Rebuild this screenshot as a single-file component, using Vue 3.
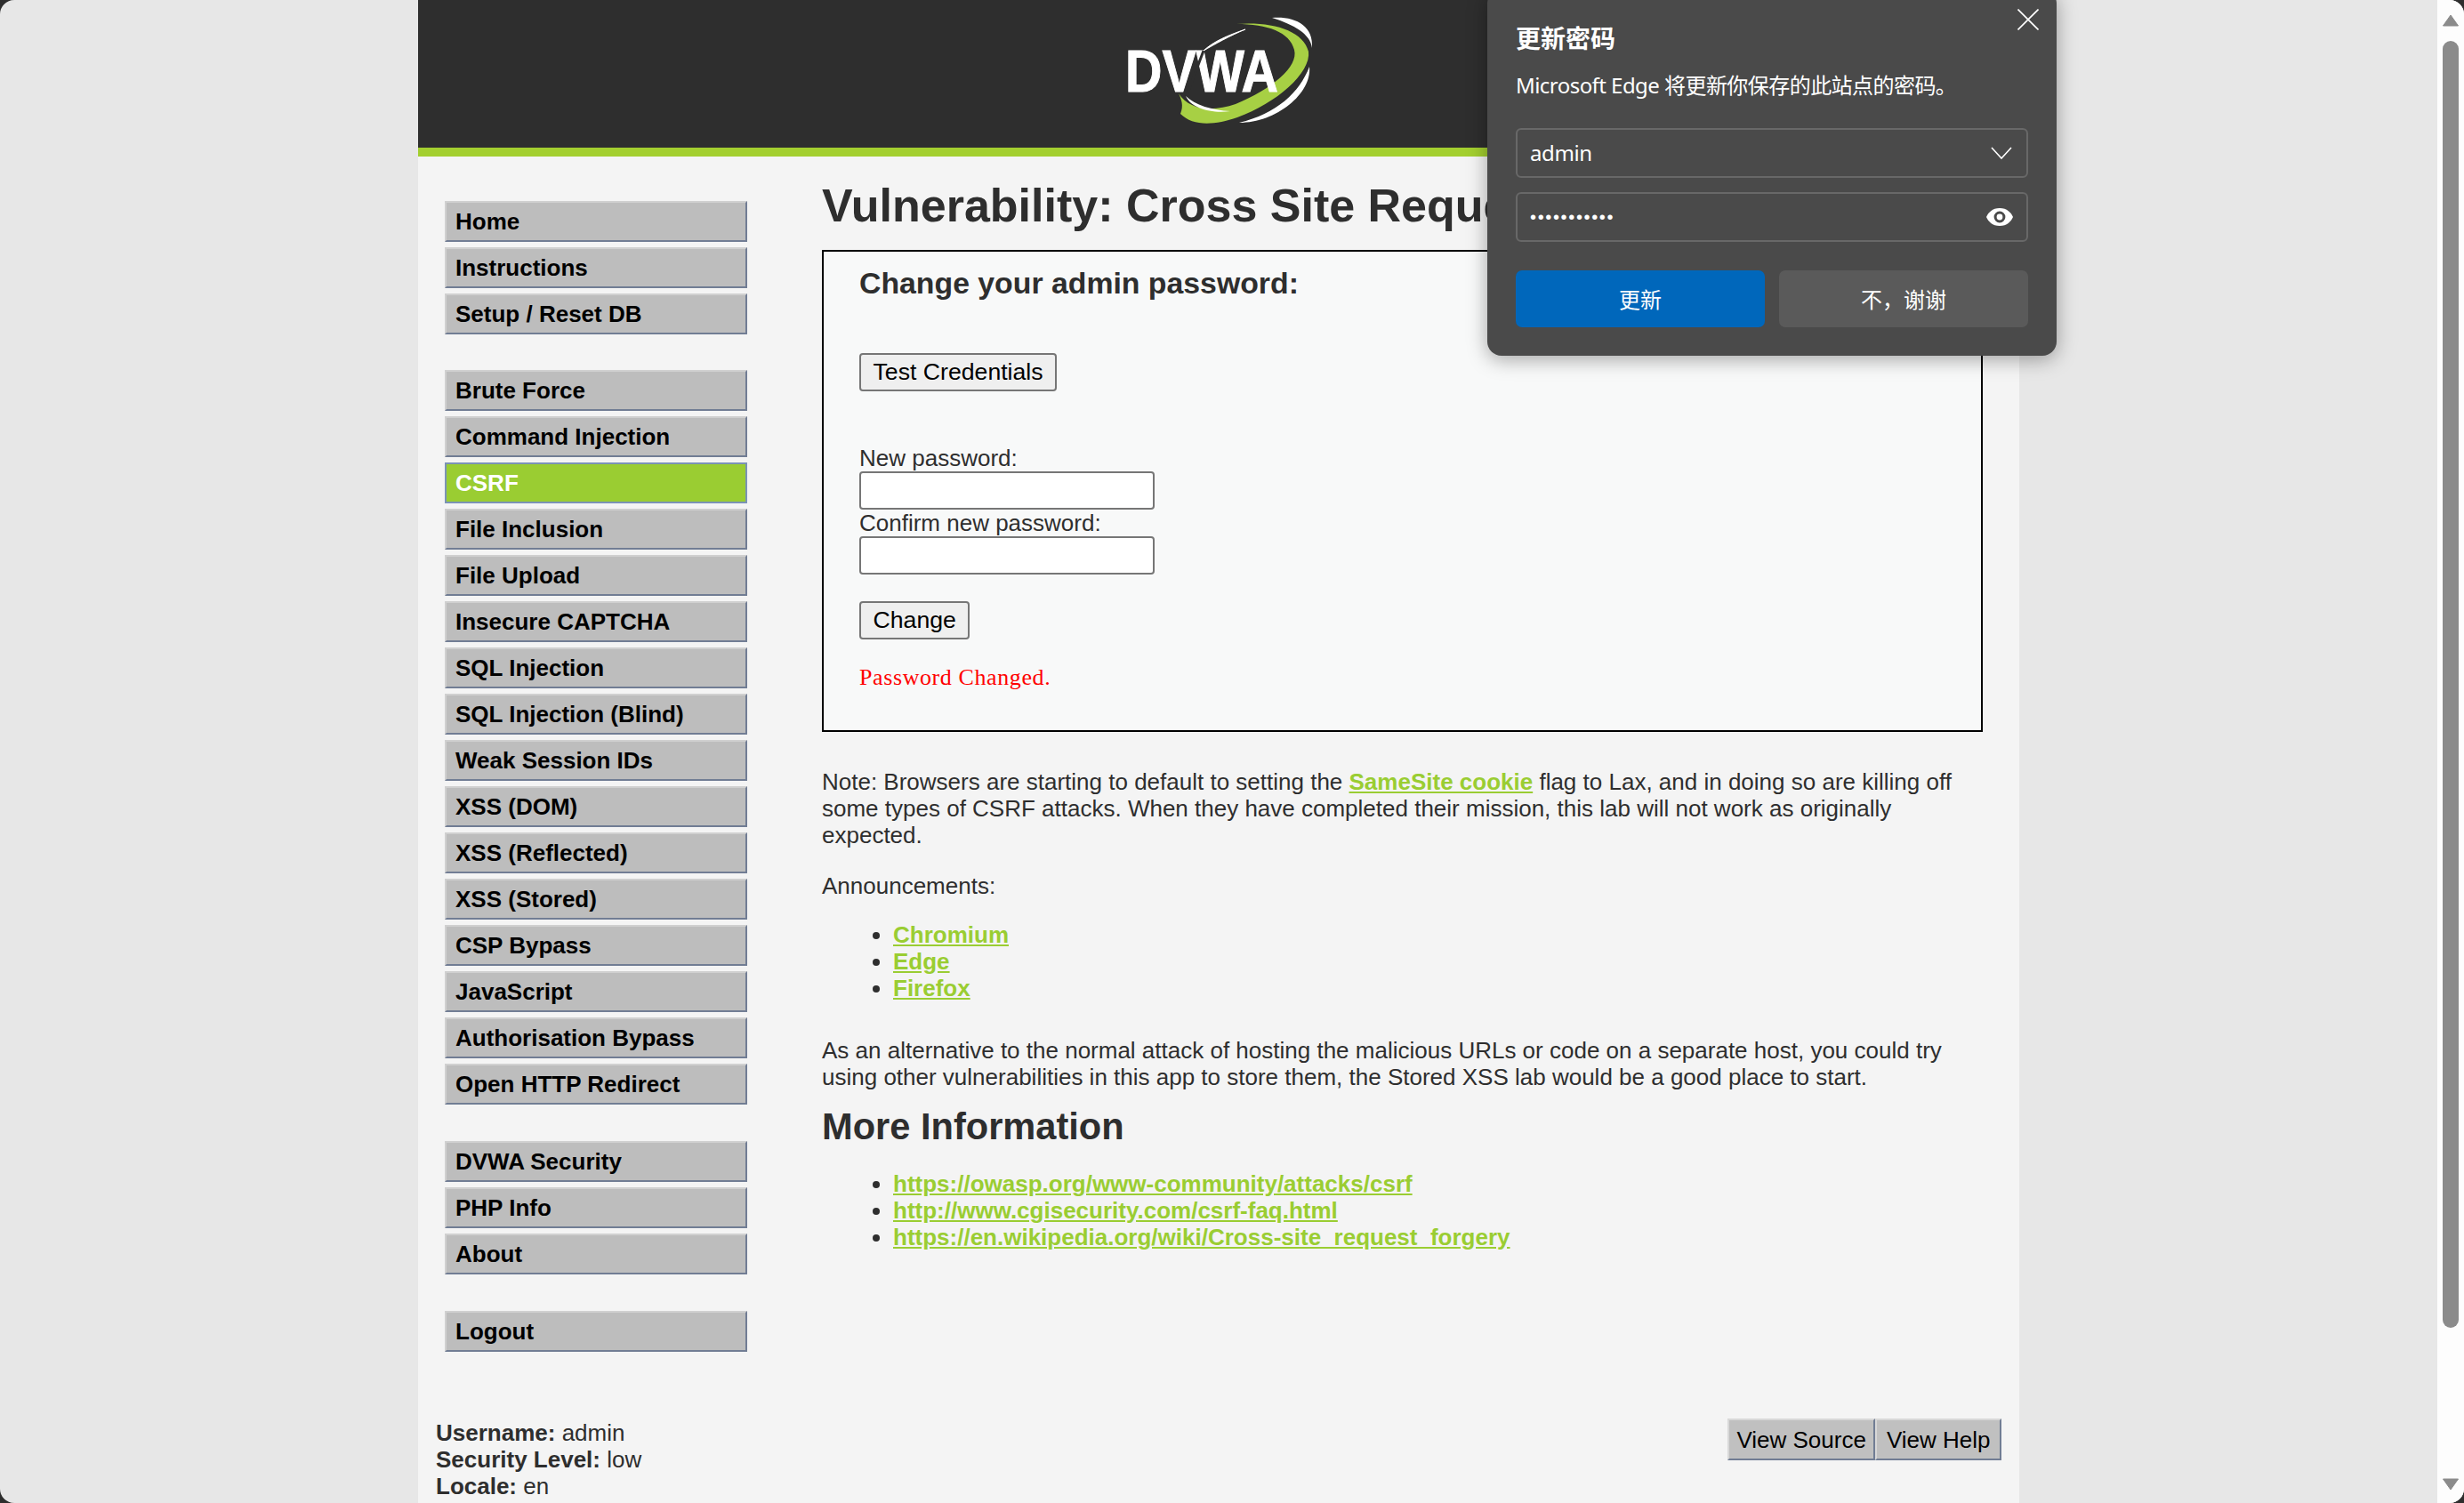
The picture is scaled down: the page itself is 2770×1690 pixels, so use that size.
<script setup>
const groups = [
  ['Home', 'Instructions', 'Setup / Reset DB'],
  ['Brute Force', 'Command Injection', 'CSRF', 'File Inclusion', 'File Upload', 'Insecure CAPTCHA', 'SQL Injection', 'SQL Injection (Blind)', 'Weak Session IDs', 'XSS (DOM)', 'XSS (Reflected)', 'XSS (Stored)', 'CSP Bypass', 'JavaScript', 'Authorisation Bypass', 'Open HTTP Redirect'],
  ['DVWA Security', 'PHP Info', 'About'],
  ['Logout']
]
const announcements = ['Chromium', 'Edge', 'Firefox']
const infoLinks = [
  'https://owasp.org/www-community/attacks/csrf',
  'http://www.cgisecurity.com/csrf-faq.html',
  'https://en.wikipedia.org/wiki/Cross-site_request_forgery'
]
</script>

<template>
  <div class="screen">
    <div class="window">
      <div class="viewport">
        <div class="container">
          <header class="header">
            <svg class="logo" width="210" height="120" viewBox="0 0 210 120">
              <path d="M125 7 C165 4 200 14 206 38 C209 62 170 96 126 112 C100 121 76 122 62 108 C66 98 63 92 60 85 C72 104 98 106 124 97 C165 80 195 55 190 36 C185 16 160 7 125 7Z" fill="#a7d044" />
              <path d="M165 0 C190 -2 212 8 210 34 C208 18 190 8 165 0Z" fill="#fff" />
              <path d="M207 55 C210 85 170 118 128 118 C170 108 196 84 207 55Z" fill="#fff" />
              <path d="M135 13 C115 20 100 26 88 37 C100 30 118 20 135 13Z" fill="#fff" stroke="#fff" stroke-width="1" />
              <path d="M68 88 C78 98 98 104 118 105 C98 108 74 102 68 88Z" fill="#fff" />
              <text class="logo-text" x="0" y="83" textLength="172" lengthAdjust="spacingAndGlyphs">DVWA</text>
              <path d="M88 37 L70 85" stroke="#2e2e2e" stroke-width="3" fill="none" />
            </svg>
          </header>
          <div class="accent"></div>

          <div class="body-row">
            <nav class="menu">
              <ul v-for="(group, i) in groups" :key="i" class="menu-group">
                <li v-for="item in group" :key="item" class="menu-item" :class="{ active: item === 'CSRF' }">{{ item }}</li>
              </ul>
            </nav>

            <main class="main">
              <h1 class="title">Vulnerability: Cross Site Request Forgery (CSRF)</h1>
              <section class="vuln-box">
                <h3 class="box-title">Change your admin password:</h3>
                <button class="native-btn test-btn" type="button">Test Credentials</button>
                <div class="form-label first-label">New password:</div>
                <div class="native-input"></div>
                <div class="form-label">Confirm new password:</div>
                <div class="native-input"></div>
                <button class="native-btn change-btn" type="button">Change</button>
                <pre class="result">Password Changed.</pre>
              </section>

              <p class="para note">Note: Browsers are starting to default to setting the <a class="link">SameSite cookie</a> flag to Lax, and in doing so are killing off some types of CSRF attacks. When they have completed their mission, this lab will not work as originally expected.</p>
              <p class="para announce">Announcements:</p>
              <ul class="links announce-list">
                <li v-for="a in announcements" :key="a"><a class="link">{{ a }}</a></li>
              </ul>
              <p class="para alternative">As an alternative to the normal attack of hosting the malicious URLs or code on a separate host, you could try using other vulnerabilities in this app to store them, the Stored XSS lab would be a good place to start.</p>
              <h2 class="more">More Information</h2>
              <ul class="links info-list">
                <li v-for="l in infoLinks" :key="l"><a class="link">{{ l }}</a></li>
              </ul>
            </main>
          </div>

          <footer class="footer">
            <div class="user-info">
              <div><b>Username:</b> admin</div>
              <div><b>Security Level:</b> low</div>
              <div><b>Locale:</b> en</div>
              <div><b>SQLi DB:</b> mysql</div>
            </div>
            <div class="source-btns">
              <span class="source-btn">View Source</span>
              <span class="source-btn">View Help</span>
            </div>
          </footer>
        </div>
      </div>

      <aside class="scrollbar">
        <svg class="arrow" width="18" height="14" viewBox="0 0 18 14"><path d="M9 1 L17.5 13 H0.5Z" fill="#8b8b8b" stroke="#8b8b8b" stroke-linejoin="round" /></svg>
        <div class="thumb"></div>
        <svg class="arrow arrow-down" width="18" height="14" viewBox="0 0 18 14"><path d="M0.5 1 H17.5 L9 13Z" fill="#8b8b8b" stroke="#8b8b8b" stroke-linejoin="round" /></svg>
      </aside>

      <div class="dialog">
        <svg class="close" width="24" height="24" viewBox="0 0 24 24"><path d="M0.5 0.5 L23.5 23.5 M23.5 0.5 L0.5 23.5" stroke="#fff" stroke-width="1.6" fill="none" /></svg>
        <div class="dialog-title">更新密码</div>
        <div class="dialog-sub">Microsoft Edge 将更新你保存的此站点的密码。</div>
        <div class="field first-field">
          <span class="admin">admin</span>
          <svg class="chevron" width="24" height="14" viewBox="0 0 24 14"><path d="M1 1 L12 13 L23 1" stroke="#fff" stroke-width="1.6" fill="none" /></svg>
        </div>
        <div class="field second-field">
          <span class="dots">•••••••••••</span>
          <svg width="30" height="20" viewBox="0 0 30 20">
            <path fill-rule="evenodd" d="M15 0 C23 0 28 5 30 10 C28 15 23 20 15 20 C7 20 2 15 0 10 C2 5 7 0 15 0Z M15 3.6 A6.4 6.4 0 1 0 15 16.4 A6.4 6.4 0 1 0 15 3.6Z" fill="#fff" />
            <circle cx="15" cy="10" r="3.4" fill="#fff" />
          </svg>
        </div>
        <div class="dialog-actions">
          <div class="dialog-btn primary">更新</div>
          <div class="dialog-btn secondary">不，谢谢</div>
        </div>
      </div>
    </div>
  </div>
</template>

<style>
html, body { margin: 0; padding: 0; background: #2e2e2e; overflow: hidden; }
</style>

<style scoped>
.screen {
  width: 2770px;
  height: 1690px;
  background: #2e2e2e;
  overflow: hidden;
}
.window {
  position: relative;
  display: flex;
  width: 100%;
  height: 100%;
  border-radius: 16px;
  overflow: hidden;
  background: #e7e7e7;
  font-family: "Liberation Sans", Arial, sans-serif;
  font-size: 26px;
  line-height: 30px;
  color: #2e2e2e;
}
.viewport { flex: 1; min-width: 0; height: 1690px; overflow: hidden; }
.container { width: 1800px; margin: 0 auto; background: #f4f4f4; min-height: 1690px; }
.header { height: 166px; background: #2e2e2e; display: flex; justify-content: center; align-items: flex-start; padding-top: 20px; box-sizing: border-box; }
.logo { overflow: visible; }
.logo-text { font-family: "Liberation Sans", Arial, sans-serif; font-weight: 700; font-size: 66px; fill: #fff; stroke: #fff; stroke-width: 1px; }
.accent { height: 10px; background: #a3cf2f; }

.body-row { display: flex; height: 1420px; padding: 50px 0 0 30px; box-sizing: border-box; }
.menu { width: 340px; flex: none; }
.menu-group { list-style: none; margin: 0 0 40px; padding: 0; }
.menu-group:nth-child(n+2) { margin-bottom: 41px; }
.menu-item {
  height: 46px;
  box-sizing: border-box;
  margin-bottom: 6px;
  padding-left: 10px;
  display: flex;
  align-items: center;
  font-weight: 700;
  color: #000;
  background: #bdbdbd;
  border: 2px solid;
  border-color: #d0d0d0 #717d94 #717d94 #d0d0d0;
}
.menu-item:last-child { margin-bottom: 0; }
.menu-item.active {
  background: #9acd32;
  color: #fff;
  border-color: #7b93b5;
}

.main { width: 1305px; margin-left: 84px; margin-top: -25px; flex: none; }
.title { margin: 0 0 20px; font-size: 52px; line-height: 60px; font-weight: 700; white-space: nowrap; }
.vuln-box {
  height: 542px;
  box-sizing: border-box;
  border: 2px solid #000;
  background: #f8f9f9;
  padding: 16px 40px 0;
}
.box-title { margin: 0 0 59px; font-size: 33.8px; line-height: 39px; font-weight: 700; }
.native-btn {
  display: block;
  height: 43px;
  box-sizing: border-box;
  padding: 0 13.5px;
  border: 2px solid #767676;
  border-radius: 4px;
  background: #efefef;
  color: #000;
  font-family: "Liberation Sans", Arial, sans-serif;
  font-size: 26.67px;
}
.form-label { height: 30px; }
.first-label { margin-top: 60px; }
.native-input {
  width: 332px;
  height: 43px;
  box-sizing: border-box;
  border: 2px solid #767676;
  border-radius: 4px;
  background: #fff;
}
.change-btn { margin-top: 30px; }
.result {
  margin: 28px 0 0;
  font-family: "Liberation Serif", serif;
  font-size: 26px;
  letter-spacing: 0.6px;
  line-height: 30px;
  color: #ff0000;
}

.para { margin: 0; }
.note { margin-top: 41px; }
.announce { margin-top: 27px; }
.links { margin: 0; padding-left: 80px; }
.announce-list { margin-top: 25px; }
.alternative { margin-top: 40px; }
.more { margin: 17px 0 25px; font-size: 41.6px; line-height: 48px; font-weight: 700; }
.link { color: #9acd32; font-weight: 700; text-decoration: underline; }

.footer { display: flex; justify-content: space-between; align-items: flex-start; padding: 0 20px; }
.source-btns { display: flex; margin-top: -1px; }
.source-btn {
  height: 47px;
  box-sizing: border-box;
  padding: 0 8.5px;
  display: flex;
  align-items: center;
  background: #c0c0c0;
  color: #000;
  font-size: 26px;
  border: 2px solid;
  border-color: #d8d8d8 #717d94 #717d94 #d8d8d8;
}
.source-btn:last-child { padding: 0 10.5px; }

.scrollbar {
  width: 30px;
  flex: none;
  height: 100%;
  background: #fdfdfd;
  position: relative;
}
.arrow { position: absolute; left: 6px; top: 16px; }
.arrow-down { top: 1662px; }
.thumb {
  position: absolute;
  left: 6px;
  top: 46px;
  width: 18px;
  height: 1447px;
  border-radius: 9px;
  background: #8b8b8b;
}

.dialog {
  position: absolute;
  left: 1672px;
  top: -12px;
  width: 640px;
  height: 412px;
  box-sizing: border-box;
  padding: 24px 32px 0;
  border-radius: 16px;
  background: #4a4a4a;
  box-shadow: 0 4px 22px rgba(0, 0, 0, 0.35);
  color: #fff;
  font-family: "Noto Sans", "Noto Sans CJK SC", sans-serif;
}
.close { position: absolute; right: 20px; top: 22px; }
.dialog-title { margin-top: 13px; font-size: 28px; line-height: 34px; font-weight: 700; font-family: "Noto Sans CJK SC", sans-serif; }
.dialog-sub { margin-top: 19px; font-size: 24px; line-height: 36px; white-space: nowrap; letter-spacing: -0.55px; }
.field {
  height: 56px;
  box-sizing: border-box;
  border: 2px solid #686868;
  border-radius: 6px;
  display: flex;
  align-items: center;
  justify-content: space-between;
  padding: 0 15px 0 14px;
  font-size: 24px;
}
.admin { letter-spacing: -0.4px; }
.chevron { margin-right: 1px; }
.first-field { margin-top: 30px; }
.second-field { margin-top: 16px; }
.dots { font-size: 20px; letter-spacing: 1.65px; font-family: "Liberation Sans", sans-serif; }
.dialog-actions { display: flex; gap: 16px; margin-top: 32px; }
.dialog-btn {
  flex: 1;
  height: 64px;
  border-radius: 7px;
  display: flex;
  align-items: center;
  justify-content: center;
  font-size: 24px;
  font-family: "Noto Sans CJK SC", sans-serif;
}
.primary { background: #0067bb; }
.secondary { background: #5a5a5a; }
</style>
